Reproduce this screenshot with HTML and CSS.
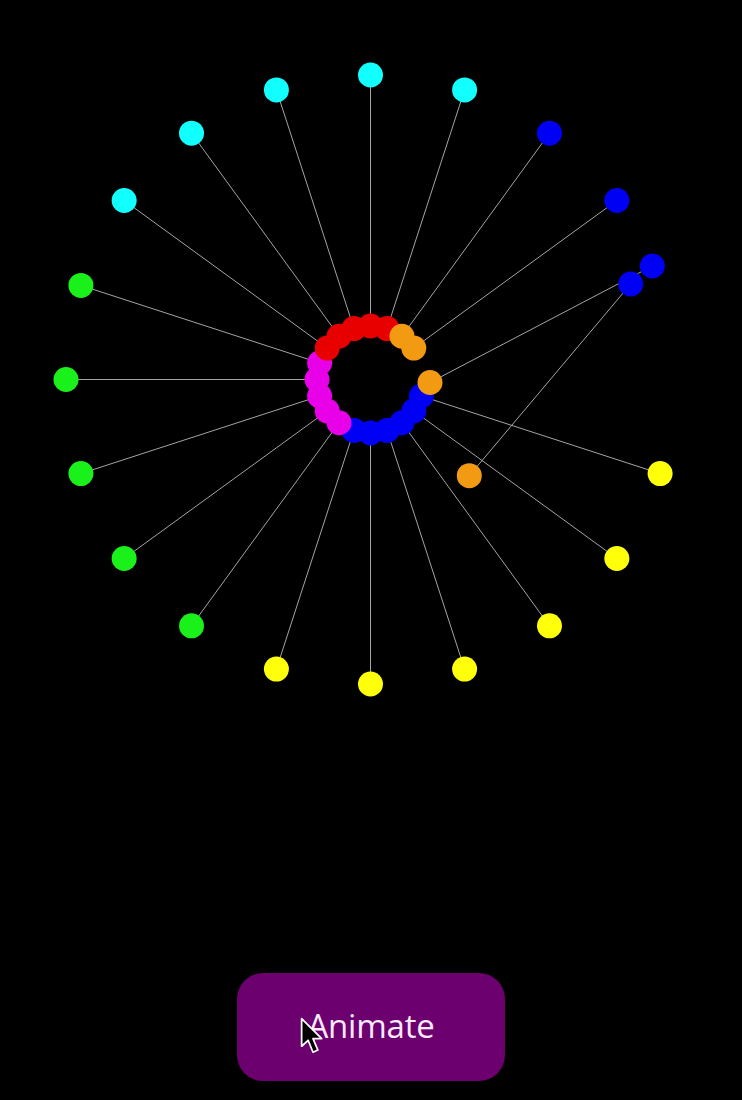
FILE: index.html
```html
<!DOCTYPE html>
<html lang="en">
<head>
    <meta charset="UTF-8" />
    <meta name="viewport" content="width=device-width, initial-scale=1" />
    <title>Spokes</title>
    <link rel="stylesheet" href="styles.css">
</head>
<body>
    <div class="stage">
        <svg id="wheel" class="wheel" width="742" height="760" viewBox="0 0 742 760">
            <g id="spokes" class="spokes"></g>
            <g id="dots"></g>
        </svg>
    </div>

    <div class="controls">
        <button class="animate-btn" type="button">Animate</button>
        <svg class="cursor" width="26" height="39" viewBox="0 0 24 36">
            <path d="M1.5 1.5 L1.5 27 L7.5 21.5 L12 32.5 L16.5 30.5 L12 20 L20 20 Z" fill="#000" stroke="#fff" stroke-width="1.6" stroke-linejoin="round" />
        </svg>
    </div>

    <script>
        const cx = 370.5, cy = 379.5;
        const innerR = 53.5, outerR = 304.5, dotR = 12.5;
        const ns = 'http://www.w3.org/2000/svg';

        const colors = {
            red: '#e80000', orange: '#f29a12', blue: '#0000f4', magenta: '#e800e8',
            cyan: '#11ffff', green: '#1af01a', yellow: '#ffff0a'
        };

        // index 0 = top, going clockwise every 18 degrees
        const innerColors = ['red', 'red', 'orange', 'orange', null, null, 'blue', 'blue', 'blue', 'blue',
            'blue', 'blue', 'magenta', 'magenta', 'magenta', 'magenta', 'magenta', 'red', 'red', 'red'];
        const outerColors = ['cyan', 'cyan', 'blue', 'blue', null, null, 'yellow', 'yellow', 'yellow', 'yellow',
            'yellow', 'yellow', 'green', 'green', 'green', 'green', 'green', 'cyan', 'cyan', 'cyan'];

        function point(i, r) {
            const a = i * 18 * Math.PI / 180;
            return { x: cx + r * Math.sin(a), y: cy - r * Math.cos(a) };
        }

        const pairs = [];
        for (let i = 0; i < 20; i++) {
            if (!innerColors[i]) continue;
            pairs.push({ a: point(i, innerR), ac: innerColors[i], b: point(i, outerR), bc: outerColors[i] });
        }
        // the two spokes caught mid-animation
        pairs.push({ a: { x: 430, y: 382.5 }, ac: 'orange', b: { x: 652.3, y: 266 }, bc: 'blue' });
        pairs.push({ a: { x: 469.3, y: 475.7 }, ac: 'orange', b: { x: 630.7, y: 284 }, bc: 'blue' });

        const spokes = document.getElementById('spokes');
        const dots = document.getElementById('dots');

        function dot(p, c) {
            const el = document.createElementNS(ns, 'circle');
            el.setAttribute('cx', p.x);
            el.setAttribute('cy', p.y);
            el.setAttribute('r', dotR);
            el.setAttribute('fill', colors[c]);
            dots.appendChild(el);
        }

        pairs.forEach(p => {
            const line = document.createElementNS(ns, 'line');
            line.setAttribute('x1', p.a.x);
            line.setAttribute('y1', p.a.y);
            line.setAttribute('x2', p.b.x);
            line.setAttribute('y2', p.b.y);
            spokes.appendChild(line);
        });
        pairs.forEach(p => dot(p.b, p.bc));
        pairs.forEach(p => dot(p.a, p.ac));
    </script>
</body>
</html>
```

FILE: styles.css
```css
html, body {
    background: #000;
}
body {
    margin: 0;
    font-family: "Open Sans", "Liberation Sans", sans-serif;
}
.stage {
    height: 760px;
}
.wheel {
    display: block;
}
.spokes line {
    stroke: #a4a4a4;
    stroke-width: 1;
}
.controls {
    position: relative;
    display: flex;
    justify-content: center;
    padding-top: 213px;
}
.animate-btn {
    width: 268px;
    height: 108px;
    border: none;
    border-radius: 26px;
    background-color: #6b006e;
    color: #fbeafb;
    font-family: "Open Sans", "Liberation Sans", sans-serif;
    font-size: 33px;
    letter-spacing: -0.2px;
    padding: 0 0 4px;
    cursor: pointer;
}
.cursor {
    position: absolute;
    left: 300px;
    top: 257px;
}
```
